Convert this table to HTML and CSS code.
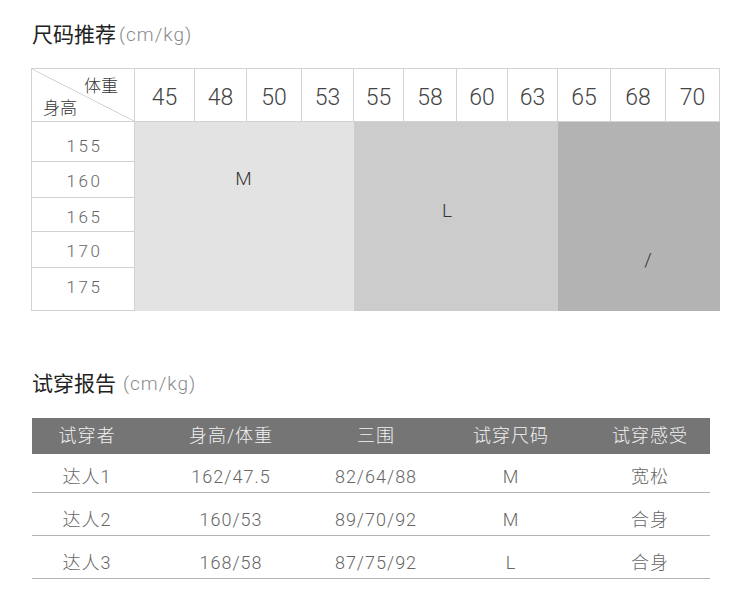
FILE: index.html
```html
<!DOCTYPE html>
<html lang="zh-CN">
<head>
<meta charset="utf-8">
<title>尺码推荐</title>
<link rel="stylesheet" href="styles.css">
</head>
<body>
<div class="page">
  <h2 class="title"><span>尺码推荐</span><span class="unit">(cm/kg)</span></h2>
  <div class="size-grid">
    <div class="cell corner"><span class="c-top">体重</span><span class="c-bottom">身高</span></div>
    <div class="cell head">45</div>
    <div class="cell head">48</div>
    <div class="cell head">50</div>
    <div class="cell head">53</div>
    <div class="cell head">55</div>
    <div class="cell head">58</div>
    <div class="cell head">60</div>
    <div class="cell head">63</div>
    <div class="cell head">65</div>
    <div class="cell head">68</div>
    <div class="cell head">70</div>
    <div class="cell height first">155</div>
    <div class="cell height">160</div>
    <div class="cell height">165</div>
    <div class="cell height">170</div>
    <div class="cell height">175</div>
    <div class="zone zone-m">M</div>
    <div class="zone zone-l">L</div>
    <div class="zone zone-x">/</div>
  </div>

  <h2 class="title title2"><span>试穿报告</span><span class="unit">(cm/kg)</span></h2>
  <div class="report">
    <div class="r-row r-head">
      <div class="c1">试穿者</div><div class="c2">身高/体重</div><div class="c3">三围</div><div class="c4">试穿尺码</div><div class="c5">试穿感受</div>
    </div>
    <div class="r-row r-first">
      <div class="c1">达人1</div><div class="c2">162/47.5</div><div class="c3">82/64/88</div><div class="c4">M</div><div class="c5">宽松</div>
    </div>
    <div class="r-row">
      <div class="c1">达人2</div><div class="c2">160/53</div><div class="c3">89/70/92</div><div class="c4">M</div><div class="c5">合身</div>
    </div>
    <div class="r-row">
      <div class="c1">达人3</div><div class="c2">168/58</div><div class="c3">87/75/92</div><div class="c4">L</div><div class="c5">合身</div>
    </div>
  </div>
</div>
</body>
</html>
```

FILE: styles.css
```css
* { box-sizing: border-box; }
body {
  margin: 0;
  background: #fff;
  font-family: Roboto, "Noto Sans CJK SC", sans-serif;
  font-weight: 300;
  color: #333;
}
.page {
  padding: 20px 0 0 31px;
}
.title {
  display: flex;
  align-items: center;
  height: 30px;
  margin: 0 0 0 1px;
  font-size: 21px;
  line-height: 30px;
  font-weight: 400;
  color: #222;
}
.unit {
  font-size: 19px;
  color: #8a8a8a;
  font-weight: 300;
  margin-left: 3px;
  letter-spacing: 1px;
}
.title2 .unit { margin-left: 7px; }
.size-grid {
  margin-top: 18px;
  display: grid;
  width: fit-content;
  grid-template-columns: 103px 60px 52px 55px 52px 50px 53px 51px 50px 53px 55px 54px;
  grid-template-rows: 53px 40px 36px 34px 36px 43px;
  border-top: 1px solid #d2d2d2;
  border-left: 1px solid #d2d2d2;
}
.cell {
  border-right: 1px solid #d2d2d2;
  border-bottom: 1px solid #d2d2d2;
  background: #fff;
}
.corner {
  display: flex;
  flex-direction: column;
  justify-content: space-between;
  padding: 6px 16px 4px 11px;
  font-size: 17px;
  line-height: 22px;
  color: #333;
  background: linear-gradient(to top right, transparent calc(50% - 0.7px), #c8c8c8 50%, transparent calc(50% + 0.7px));
}
.c-top { align-self: flex-end; }
.c-bottom { align-self: flex-start; }
.head {
  display: flex;
  align-items: center;
  justify-content: center;
  padding-top: 5px;
  font-size: 23px;
  color: #444;
}
.height {
  display: flex;
  justify-content: center;
  padding-top: 8px;
  padding-left: 3px;
  font-size: 17px;
  line-height: 22px;
  letter-spacing: 2.5px;
  color: #666;
}
.height.first { padding-top: 13px; }
.zone {
  grid-row: 2 / 7;
  font-size: 19px;
  line-height: 22px;
  color: #333;
  text-align: center;
}
.zone-m {
  grid-column: 2 / 6;
  background: #e3e3e3;
  padding-top: 46px;
  padding-right: 2px;
}
.zone-l {
  grid-column: 6 / 10;
  background: #cccccc;
  padding-top: 78px;
  padding-right: 18px;
}
.zone-x {
  grid-column: 10 / 13;
  background: #b3b3b3;
  padding-top: 127px;
  padding-left: 18px;
}
.title2 { margin-top: 58px; }
.report {
  margin: 19px 0 0 1px;
  width: 678px;
}
.r-row {
  display: flex;
  height: 43px;
  align-items: flex-end;
  padding-bottom: 4px;
  border-bottom: 1px solid #b4b4b4;
  font-size: 18px;
  line-height: 22px;
  letter-spacing: 1px;
  color: #666;
}
.r-row > div { text-align: center; }
.r-head {
  height: 36px;
  align-items: center;
  padding-bottom: 0;
  border-bottom: none;
  background: #757575;
  color: #f2f2f2;
}
.r-first { height: 39px; }
.c1 { width: 110px; }
.c2 { width: 178px; }
.c3 { width: 112px; }
.c4 { width: 158px; }
.c5 { width: 120px; }
```
